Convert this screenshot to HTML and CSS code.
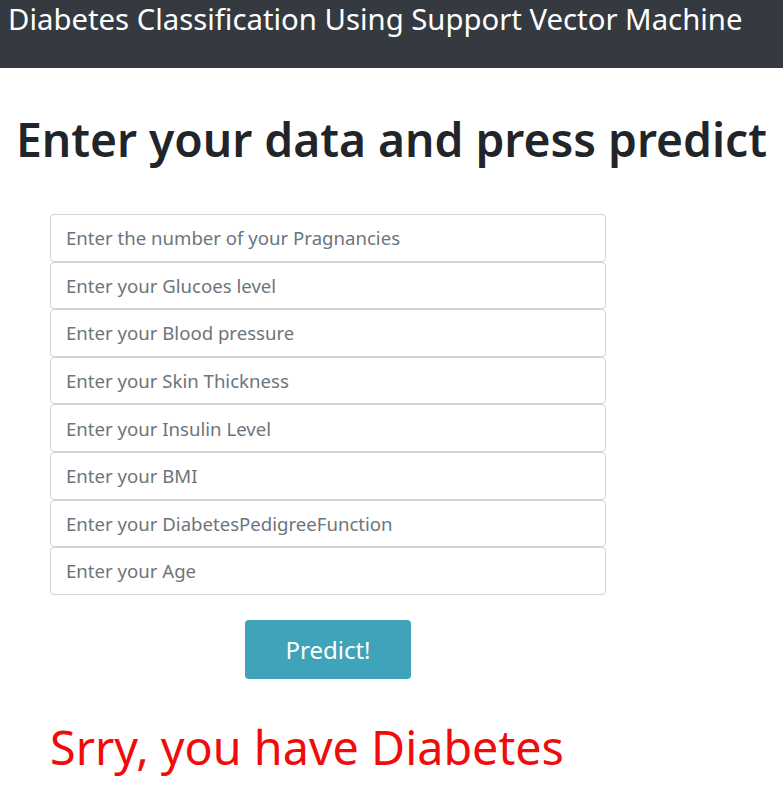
FILE: index.html
```html
<!DOCTYPE html>
<html lang="en">
<head>
<meta charset="utf-8">
<title>Diabetes Classification</title>
<link rel="stylesheet" href="styles.css">
</head>
<body>
<nav class="navbar">
  <span class="brand">Diabetes Classification Using Support Vector Machine</span>
</nav>
<main class="main">
  <h1 class="title">Enter your data and press predict</h1>
  <form class="form">
    <input class="field" type="text" placeholder="Enter the number of your Pragnancies">
    <input class="field" type="text" placeholder="Enter your Glucoes level">
    <input class="field" type="text" placeholder="Enter your Blood pressure">
    <input class="field" type="text" placeholder="Enter your Skin Thickness">
    <input class="field" type="text" placeholder="Enter your Insulin Level">
    <input class="field" type="text" placeholder="Enter your BMI">
    <input class="field" type="text" placeholder="Enter your DiabetesPedigreeFunction">
    <input class="field" type="text" placeholder="Enter your Age">
    <div class="actions">
      <button class="btn" type="button">Predict!</button>
    </div>
  </form>
  <p class="result">Srry, you have Diabetes</p>
</main>
</body>
</html>
```
FILE: styles.css
```css
* { box-sizing: border-box; }
html, body { margin: 0; padding: 0; }
body {
  font-family: "Noto Sans", "Open Sans", sans-serif;
  color: #212529;
  background: #fff;
}
.navbar {
  background: #343a40;
  height: 68px;
  padding: 0 8px;
}
.brand {
  display: block;
  color: #fff;
  font-size: 29.3px;
  line-height: 38px;
  white-space: nowrap;
}
.main {
  padding-top: 40px;
}
.title {
  margin: 0;
  text-align: center;
  font-size: 46.2px;
  font-weight: 600;
  line-height: 64px;
}
.form {
  width: 556px;
  margin: 42px 0 0 50px;
  display: flex;
  flex-direction: column;
}
.field {
  display: block;
  width: 100%;
  height: 47.6px;
  padding: 0 15px;
  font-family: inherit;
  font-size: 18.6px;
  color: #495057;
  border: 1px solid #ced4da;
  border-radius: 4px;
  background: #fff;
}
.field::placeholder { color: #6c757d; opacity: 1; }
.actions {
  display: flex;
  justify-content: center;
  margin-top: 25px;
}
.btn {
  width: 166px;
  height: 59px;
  border: 0;
  border-radius: 4px;
  background: #3fa3b9;
  color: #fff;
  font-family: inherit;
  font-size: 24px;
}
.result {
  margin: 38px 0 0 50px;
  color: #f00c0c;
  font-size: 46.7px;
  line-height: 60px;
}
```
